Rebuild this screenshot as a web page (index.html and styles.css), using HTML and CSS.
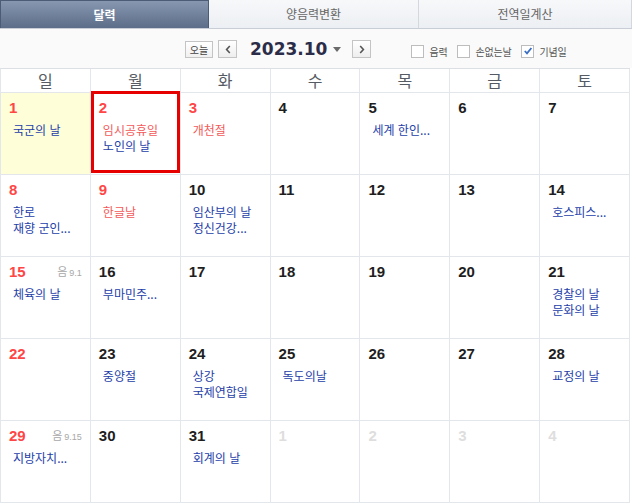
FILE: index.html
```html
<!DOCTYPE html>
<html lang="ko">
<head>
<meta charset="utf-8">
<title>달력</title>
<link rel="stylesheet" href="styles.css">
</head>
<body>
<div class="tabs">
  <div class="tab active">달력</div>
  <div class="tab">양음력변환</div>
  <div class="tab">전역일계산</div>
</div>
<div class="toolbar">
  <div class="btn-today">오늘</div>
  <div class="btn-arrow prev"><svg width="6" height="9" viewBox="0 0 6 9"><path d="M4.8 1 L1.6 4.5 L4.8 8" fill="none" stroke="#555" stroke-width="1.6"/></svg></div>
  <div class="title">2023.10</div>
  <div class="caret"></div>
  <div class="btn-arrow next"><svg width="6" height="9" viewBox="0 0 6 9"><path d="M1.2 1 L4.4 4.5 L1.2 8" fill="none" stroke="#555" stroke-width="1.6"/></svg></div>
  <div class="checks">
    <span class="box"></span><span class="lbl">음력</span>
    <span class="box"></span><span class="lbl">손없는날</span>
    <span class="box checked"><svg width="10" height="10" viewBox="0 0 10 10"><path d="M1.8 5 L4 7.4 L8.4 2" fill="none" stroke="#3b6fc4" stroke-width="1.8"/></svg></span><span class="lbl">기념일</span>
  </div>
</div>
<div class="cal">
  <div class="head">일</div><div class="head">월</div><div class="head">화</div><div class="head">수</div><div class="head">목</div><div class="head">금</div><div class="head">토</div>

  <div class="cell today"><div class="top"><span class="num red">1</span></div><div class="ev">국군의 날</div></div>
  <div class="cell selected"><div class="top"><span class="num red">2</span></div><div class="ev hol">임시공휴일</div><div class="ev">노인의 날</div></div>
  <div class="cell"><div class="top"><span class="num red">3</span></div><div class="ev hol">개천절</div></div>
  <div class="cell"><div class="top"><span class="num">4</span></div></div>
  <div class="cell"><div class="top"><span class="num">5</span></div><div class="ev">세계 한인...</div></div>
  <div class="cell"><div class="top"><span class="num">6</span></div></div>
  <div class="cell"><div class="top"><span class="num">7</span></div></div>

  <div class="cell"><div class="top"><span class="num red">8</span></div><div class="ev">한로</div><div class="ev">재향 군인...</div></div>
  <div class="cell"><div class="top"><span class="num red">9</span></div><div class="ev hol">한글날</div></div>
  <div class="cell"><div class="top"><span class="num">10</span></div><div class="ev">임산부의 날</div><div class="ev">정신건강...</div></div>
  <div class="cell"><div class="top"><span class="num">11</span></div></div>
  <div class="cell"><div class="top"><span class="num">12</span></div></div>
  <div class="cell"><div class="top"><span class="num">13</span></div></div>
  <div class="cell"><div class="top"><span class="num">14</span></div><div class="ev">호스피스...</div></div>

  <div class="cell"><div class="top"><span class="num red">15</span><span class="lunar">음<small>9.1</small></span></div><div class="ev">체육의 날</div></div>
  <div class="cell"><div class="top"><span class="num">16</span></div><div class="ev">부마민주...</div></div>
  <div class="cell"><div class="top"><span class="num">17</span></div></div>
  <div class="cell"><div class="top"><span class="num">18</span></div></div>
  <div class="cell"><div class="top"><span class="num">19</span></div></div>
  <div class="cell"><div class="top"><span class="num">20</span></div></div>
  <div class="cell"><div class="top"><span class="num">21</span></div><div class="ev">경찰의 날</div><div class="ev">문화의 날</div></div>

  <div class="cell"><div class="top"><span class="num red">22</span></div></div>
  <div class="cell"><div class="top"><span class="num">23</span></div><div class="ev">중양절</div></div>
  <div class="cell"><div class="top"><span class="num">24</span></div><div class="ev">상강</div><div class="ev">국제연합일</div></div>
  <div class="cell"><div class="top"><span class="num">25</span></div><div class="ev">독도의날</div></div>
  <div class="cell"><div class="top"><span class="num">26</span></div></div>
  <div class="cell"><div class="top"><span class="num">27</span></div></div>
  <div class="cell"><div class="top"><span class="num">28</span></div><div class="ev">교정의 날</div></div>

  <div class="cell"><div class="top"><span class="num red">29</span><span class="lunar">음<small>9.15</small></span></div><div class="ev">지방자치...</div></div>
  <div class="cell"><div class="top"><span class="num">30</span></div></div>
  <div class="cell"><div class="top"><span class="num">31</span></div><div class="ev">회계의 날</div></div>
  <div class="cell"><div class="top"><span class="num other">1</span></div></div>
  <div class="cell"><div class="top"><span class="num other">2</span></div></div>
  <div class="cell"><div class="top"><span class="num other">3</span></div></div>
  <div class="cell"><div class="top"><span class="num other">4</span></div></div>
</div>
</body>
</html>
```
FILE: styles.css
```css
* { box-sizing: border-box; margin: 0; padding: 0; }
body {
  width: 632px;
  height: 503px;
  overflow: hidden;
  background: #fff;
  font-family: "Noto Sans CJK KR", "Liberation Sans", sans-serif;
}
.tabs {
  display: grid;
  grid-template-columns: 209px 210px 1fr;
  height: 29px;
  border-bottom: 1px solid #c9ced6;
}
.tab {
  background: linear-gradient(#f7f8fa, #eceff3);
  border-right: 1px solid #d3d8de;
  color: #666;
  font-size: 12px;
  line-height: 28px;
  text-align: center;
}
.tab.active {
  background: linear-gradient(#8797b0, #5c6d89);
  border: 1px solid #4c5c76;
  border-bottom: none;
  color: #fff;
  font-weight: bold;
  line-height: 27px;
}
.toolbar {
  height: 39px;
  background: #fafafa;
  display: flex;
  align-items: center;
  padding-left: 185px;
}
.btn-today {
  width: 28px;
  height: 17px;
  border: 1px solid #c4c4c4;
  background: linear-gradient(#fff, #f0f0f0);
  font-size: 10px;
  line-height: 15px;
  text-align: center;
  color: #444;
  margin-top: 1px;
}
.btn-arrow {
  width: 19px;
  height: 18px;
  border: 1px solid #c4c4c4;
  background: linear-gradient(#fff, #eee);
  display: flex;
  align-items: center;
  justify-content: center;
  margin-top: 1px;
}
.prev { margin-left: 5px; }
.next { margin-left: 11px; }
.title {
  margin-left: 13px;
  font-family: "DejaVu Sans", sans-serif;
  font-weight: bold;
  font-size: 17px;
  color: #2b2d48;
  line-height: 20px;
}
.caret {
  margin-left: 6px;
  margin-top: 1px;
  width: 0;
  height: 0;
  border-left: 4px solid transparent;
  border-right: 4px solid transparent;
  border-top: 5px solid #6a6a6a;
}
.checks {
  display: flex;
  align-items: center;
  margin-left: 40px;
  margin-top: 5px;
}
.box {
  width: 13px;
  height: 13px;
  border: 1px solid #bdbdbd;
  background: #fff;
  display: flex;
  align-items: center;
  justify-content: center;
}
.lbl {
  font-size: 10px;
  letter-spacing: -0.2px;
  color: #555;
  margin-left: 5px;
  margin-right: 10px;
  line-height: 13px;
}
.cal {
  width: 630px;
  display: grid;
  grid-template-columns: repeat(7, 1fr);
  grid-template-rows: 24px repeat(5, 82px);
  border-top: 1px solid #dcdfe4;
  border-left: 1px solid #e3e6eb;
}
.head {
  border-right: 1px solid #e3e6eb;
  border-bottom: 1px solid #e3e6eb;
  text-align: center;
  font-size: 16px;
  line-height: 22px;
  color: #555a63;
}
.cell {
  position: relative;
  border-right: 1px solid #e3e6eb;
  border-bottom: 1px solid #e3e6eb;
  padding: 6px 8px 0 8px;
}
.cell.today { background: #fefed9; }
.cell.selected::after {
  content: "";
  position: absolute;
  top: -2px;
  left: 0;
  right: 0;
  bottom: 1px;
  border: 3px solid #e60000;
}
.top {
  display: flex;
  justify-content: space-between;
  align-items: center;
  height: 18px;
}
.num {
  font-family: "Liberation Sans", sans-serif;
  font-weight: bold;
  font-size: 15px;
  line-height: 18px;
  color: #1e1e1e;
}
.num.red { color: #ff4646; }
.num.other { color: #dedede; }
.lunar {
  font-size: 11px;
  color: #a8a8a8;
  line-height: 18px;
}
.lunar small {
  font-family: "Liberation Sans", sans-serif;
  font-size: 9px;
  margin-left: 2px;
}
.ev {
  font-size: 12px;
  line-height: 16px;
  color: #2440a8;
  padding-left: 4px;
  white-space: nowrap;
}
.top + .ev { margin-top: 5px; }
.ev.hol { color: #f25a5a; }
```
